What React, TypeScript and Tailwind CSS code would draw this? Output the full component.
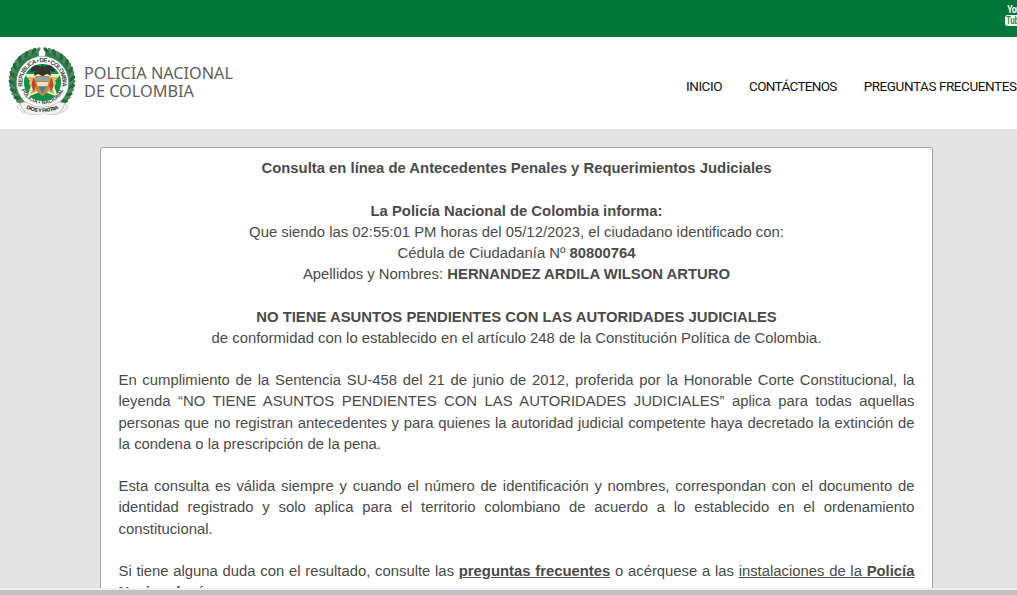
import React from "react";

const leaves = Array.from({ length: 34 }, (_, i) => i);

function Crest() {
  return (
    <svg width="70" height="70" viewBox="0 0 70 70" className="block shrink-0">
      <defs>
        <path id="crest-top" d="M16.4 43.1 A20 20 0 1 1 54.6 43.1" />
        <path id="crest-bottom" d="M14 43.5 A22.6 22.6 0 0 0 57 43.5" />
        <path id="crest-ribbon" d="M18 63 Q35.5 71.5 53 63" />
      </defs>
      <path d="M31 4C12 5 3 19 3 35c0 11 4 18 10 24l6-4C8 43 9 18 32 11z" fill="#2f7d4c" />
      <path d="M39 4c19 1 28 15 28 31 0 11-4 18-10 24l-6-4C62 43 61 18 38 11z" fill="#2f7d4c" />
      {leaves.map((i) => {
        const left = i < 17;
        const deg = (left ? i : i - 17) * 7.8 + 8;
        const t = (deg * Math.PI) / 180;
        const side = left ? -1 : 1;
        const x = 35 + side * Math.sin(t) * 30.6;
        const y = 35.5 - Math.cos(t) * 30.6;
        return (
          <g key={i}>
            <ellipse cx={x} cy={y} rx="3.6" ry="1.8" fill={i % 2 ? "#23683f" : "#43905b"} transform={`rotate(${side * (deg + 40)} ${x} ${y})`} />
            {i % 2 === 0 && <circle cx={x} cy={y} r="0.9" fill="#b0563f" />}
          </g>
        );
      })}
      <circle cx="35.5" cy="37.5" r="26.3" fill="#f8faf8" stroke="#5f8a70" strokeWidth="0.6" />
      <circle cx="35.5" cy="37.5" r="18.6" fill="#0f9149" />
      <text fontFamily="Liberation Sans, sans-serif" fontSize="6" fontWeight="700" fill="#3c4240">
        <textPath href="#crest-top" startOffset="50%" textAnchor="middle" textLength="71">REPUBLICA • DE • COLOMBIA</textPath>
      </text>
      <path d="m35.5 22 4.5 7 14 0-8 9 5 14-15.5-6-15.5 6 5-14-8-9 14 0z" fill="#f1eec6" />
      <path d="m35.5 24 3 9 12-1-7 8 4 9-12-5-12 5 4-9-7-8 12 1z" fill="#d0ad52" />
      <path d="M34 22c-5-4-10-1-11 5l5-1-1 5 4-2 4.500 2 4.500-2 4 2-1-5 5 1c-1-6-6-9-11-5l-1.500-3z" fill="#37332f" />
      <path d="M28.500 31h14v8q0 9-7 12-7-3-7-12z" fill="#b88b43" />
      <path d="M29.500 32h12v4h-12z" fill="#8fa3b5" />
      <path d="M29.500 37h12l-1 4h-10z" fill="#e9dfbf" />
      <path d="m31.500 42 4 6 4-6z" fill="#457ea4" />
      <path d="m27 32-3 8 3 7 2-6zm17 0 3 8-3 7-2-6z" fill="#c44232" />
      <path d="m24 32-2 6 2 5 1-5zm23 0 2 6-2 5-1-5z" fill="#e5c84e" />
      <path d="m13 58 6-1q16.500 11 33 0l6 1 3 4-5 5q-20.500 7-41 0l-5-5z" fill="#f3f3ef" stroke="#aaa" strokeWidth="0.6" />
      <path d="m13 58 2 5 3 4m40-9-2 5-3 4" fill="none" stroke="#999" strokeWidth="0.6" />
      <text fontFamily="Liberation Sans, sans-serif" fontSize="5.2" fontWeight="700" fill="#3c4240">
        <textPath href="#crest-bottom" startOffset="50%" textAnchor="middle" textLength="54">POLICIA • NACIONAL</textPath>
      </text>
      <text fontFamily="Liberation Sans, sans-serif" fontSize="5.4" fontWeight="700" fill="#222">
        <textPath href="#crest-ribbon" startOffset="50%" textAnchor="middle" textLength="34">DIOS Y PATRIA</textPath>
      </text>
    </svg>
  );
}

export default function App() {
  return (
    <div className="flex h-[595px] w-[1017px] flex-col overflow-hidden bg-[#e4e4e4] font-['Liberation_Sans',sans-serif]">
      <div className="flex h-[37px] shrink-0 justify-end overflow-hidden bg-[#007638]">
        <div className="mt-[5px] -mr-[6px] flex w-[18px] flex-col items-center text-white">
          <span className="h-[10px] scale-x-[0.85] font-['Roboto',sans-serif] text-[10px] leading-[10px] font-bold tracking-tighter">You</span>
          <span className="flex h-[11px] w-[18px] items-center justify-center rounded-[3px] bg-white text-[#39895f]">
            <span className="scale-x-[0.8] font-['Roboto',sans-serif] text-[10px] leading-none font-bold tracking-tighter">Tube</span>
          </span>
        </div>
      </div>
      <header className="flex h-[92px] shrink-0 justify-between bg-white">
        <div className="flex pt-[8px] pl-[7px]">
          <Crest />
          <div className="pt-[20px] pl-[7px]">
            <svg width="152" height="40" viewBox="0 0 152 40">
              <text x="0" y="14" fontSize="15.5" fill="#606060" fontFamily="Noto Sans, sans-serif" textLength="149" lengthAdjust="spacingAndGlyphs">POLICÍA NACIONAL</text>
              <text x="0" y="32" fontSize="15.5" fill="#606060" fontFamily="Noto Sans, sans-serif" textLength="110" lengthAdjust="spacingAndGlyphs">DE COLOMBIA</text>
            </svg>
          </div>
        </div>
        <nav className="flex gap-[27px] pt-[39px] pr-[0.5px] font-['Roboto',sans-serif] text-[13.5px] leading-5 tracking-[-0.43px] whitespace-nowrap text-[#111]">
          <a>INICIO</a>
          <a className="tracking-[-0.68px]">CONTÁCTENOS</a>
          <a>PREGUNTAS FRECUENTES</a>
        </nav>
      </header>
      <main className="h-[459px] shrink-0 overflow-hidden px-[100px] pt-[18px]">
        <div className="h-[600px] w-[833px] rounded-[3px] border border-[#a3a3a3] bg-white px-[17.5px] pt-[10.3px] text-[14.85px] leading-[21.2px] text-[#4a4a4a]">
          <div className="text-center">
            <h1 className="mb-[21.2px] font-bold">Consulta en línea de Antecedentes Penales y Requerimientos Judiciales</h1>
            <p className="mb-[21.2px]">
              <b>La Policía Nacional de Colombia informa:</b><br />
              Que siendo las 02:55:01 PM horas del 05/12/2023, el ciudadano identificado con:<br />
              Cédula de Ciudadanía Nº <b>80800764</b><br />
              Apellidos y Nombres: <b>HERNANDEZ ARDILA WILSON ARTURO</b>
            </p>
            <p className="mb-[21.2px]">
              <b>NO TIENE ASUNTOS PENDIENTES CON LAS AUTORIDADES JUDICIALES</b><br />
              de conformidad con lo establecido en el artículo 248 de la Constitución Política de Colombia.
            </p>
          </div>
          <div className="text-justify">
            <p className="mb-[21.2px]">En cumplimiento de la Sentencia SU-458 del 21 de junio de 2012, proferida por la Honorable Corte Constitucional, la leyenda “NO TIENE ASUNTOS PENDIENTES CON LAS AUTORIDADES JUDICIALES” aplica para todas aquellas personas que no registran antecedentes y para quienes la autoridad judicial competente haya decretado la extinción de la condena o la prescripción de la pena.</p>
            <p className="mb-[21.2px]">Esta consulta es válida siempre y cuando el número de identificación y nombres, correspondan con el documento de identidad registrado y solo aplica para el territorio colombiano de acuerdo a lo establecido en el ordenamiento constitucional.</p>
            <p>Si tiene alguna duda con el resultado, consulte las <b className="underline">preguntas frecuentes</b> o acérquese a las <a className="underline">instalaciones de la <b>Policía</b></a> <b>Nacional</b> más</p>
          </div>
        </div>
      </main>
      <div className="h-[7px] shrink-0 border-t-2 border-[#f0f0f0] bg-[#c1c1c1]" />
    </div>
  );
}
